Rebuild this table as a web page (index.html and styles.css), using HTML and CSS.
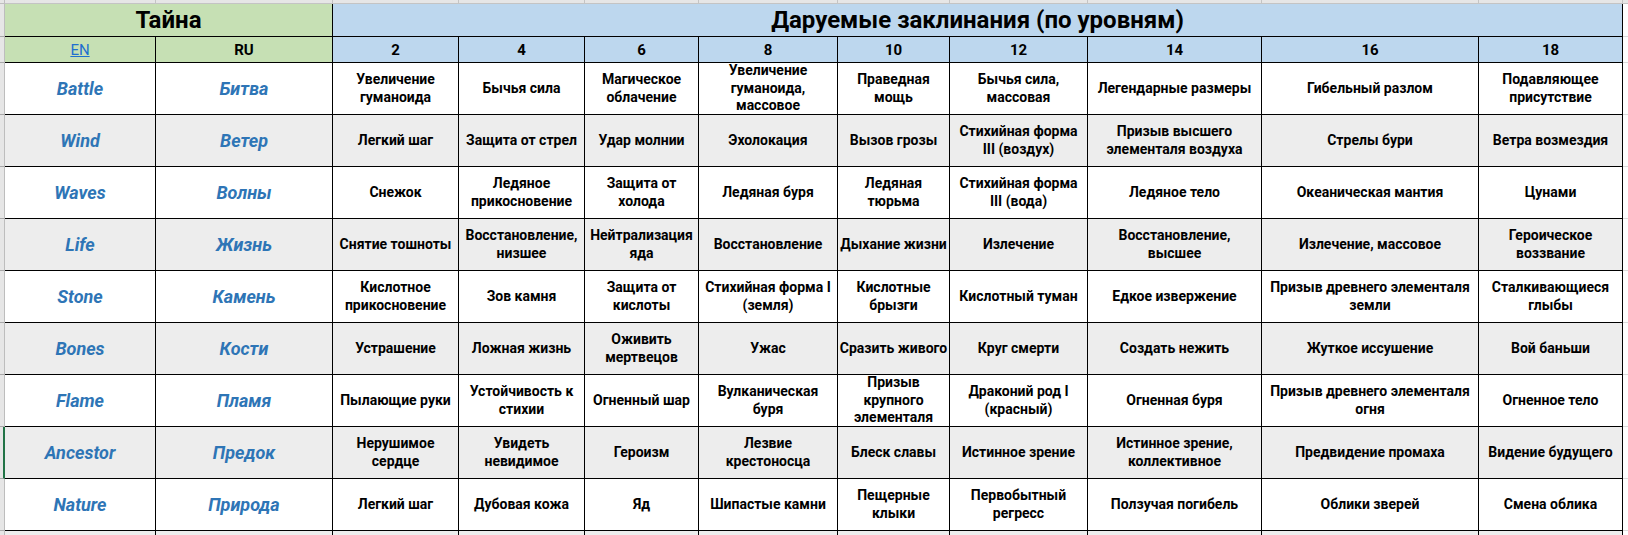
FILE: index.html
```html
<!DOCTYPE html>
<html lang="ru">
<head>
<meta charset="utf-8">
<title>Тайна — Даруемые заклинания</title>
<link rel="stylesheet" href="styles.css">
</head>
<body>
<div class="sheet">
  <div class="gutter">
    <div class="g-corner"></div>
    <div class="g g-h1"></div>
    <div class="g g-h2"></div>
    <div class="g g-row"></div>
    <div class="g g-row"></div>
    <div class="g g-row"></div>
    <div class="g g-row"></div>
    <div class="g g-row"></div>
    <div class="g g-row"></div>
    <div class="g g-row"></div>
    <div class="g g-row g-sel"></div>
    <div class="g g-row"></div>
    <div class="g g-row"></div>
  </div>
  <div class="main">
    <div class="colhdr">
      <div></div><div></div><div></div><div></div><div></div><div></div><div></div><div></div><div></div><div></div><div></div>
    </div>
    <div class="grid">
      <div class="c title green span2">Тайна</div>
      <div class="c title blue span9">Даруемые заклинания (по уровням)</div>

      <div class="c hdr green"><a class="link" href="#">EN</a></div>
      <div class="c hdr green">RU</div>
      <div class="c hdr blue">2</div>
      <div class="c hdr blue">4</div>
      <div class="c hdr blue">6</div>
      <div class="c hdr blue">8</div>
      <div class="c hdr blue">10</div>
      <div class="c hdr blue">12</div>
      <div class="c hdr blue">14</div>
      <div class="c hdr blue">16</div>
      <div class="c hdr blue">18</div>

      <div class="c name">Battle</div>
      <div class="c name">Битва</div>
      <div class="c t"><span>Увеличение гуманоида</span></div>
      <div class="c t"><span>Бычья сила</span></div>
      <div class="c t"><span>Магическое облачение</span></div>
      <div class="c t"><span>Увеличение гуманоида, массовое</span></div>
      <div class="c t tight"><span>Праведная мощь</span></div>
      <div class="c t"><span>Бычья сила, массовая</span></div>
      <div class="c t"><span>Легендарные размеры</span></div>
      <div class="c t"><span>Гибельный разлом</span></div>
      <div class="c t"><span>Подавляющее присутствие</span></div>

      <div class="c name alt">Wind</div>
      <div class="c name alt">Ветер</div>
      <div class="c t alt"><span>Легкий шаг</span></div>
      <div class="c t alt"><span>Защита от стрел</span></div>
      <div class="c t alt"><span>Удар молнии</span></div>
      <div class="c t alt"><span>Эхолокация</span></div>
      <div class="c t tight alt"><span>Вызов грозы</span></div>
      <div class="c t alt"><span>Стихийная форма III (воздух)</span></div>
      <div class="c t alt"><span>Призыв высшего элементаля воздуха</span></div>
      <div class="c t alt"><span>Стрелы бури</span></div>
      <div class="c t alt"><span>Ветра возмездия</span></div>

      <div class="c name">Waves</div>
      <div class="c name">Волны</div>
      <div class="c t"><span>Снежок</span></div>
      <div class="c t"><span>Ледяное прикосновение</span></div>
      <div class="c t"><span>Защита от холода</span></div>
      <div class="c t"><span>Ледяная буря</span></div>
      <div class="c t tight"><span>Ледяная тюрьма</span></div>
      <div class="c t"><span>Стихийная форма III (вода)</span></div>
      <div class="c t"><span>Ледяное тело</span></div>
      <div class="c t"><span>Океаническая мантия</span></div>
      <div class="c t"><span>Цунами</span></div>

      <div class="c name alt">Life</div>
      <div class="c name alt">Жизнь</div>
      <div class="c t alt"><span>Снятие тошноты</span></div>
      <div class="c t alt"><span>Восстановление, низшее</span></div>
      <div class="c t alt"><span>Нейтрализация яда</span></div>
      <div class="c t alt"><span>Восстановление</span></div>
      <div class="c t tight alt"><span>Дыхание жизни</span></div>
      <div class="c t alt"><span>Излечение</span></div>
      <div class="c t alt"><span>Восстановление, высшее</span></div>
      <div class="c t alt"><span>Излечение, массовое</span></div>
      <div class="c t alt"><span>Героическое воззвание</span></div>

      <div class="c name">Stone</div>
      <div class="c name">Камень</div>
      <div class="c t"><span>Кислотное прикосновение</span></div>
      <div class="c t"><span>Зов камня</span></div>
      <div class="c t"><span>Защита от кислоты</span></div>
      <div class="c t"><span>Стихийная форма I (земля)</span></div>
      <div class="c t tight"><span>Кислотные брызги</span></div>
      <div class="c t"><span>Кислотный туман</span></div>
      <div class="c t"><span>Едкое извержение</span></div>
      <div class="c t"><span>Призыв древнего элементаля земли</span></div>
      <div class="c t"><span>Сталкивающиеся глыбы</span></div>

      <div class="c name alt">Bones</div>
      <div class="c name alt">Кости</div>
      <div class="c t alt"><span>Устрашение</span></div>
      <div class="c t alt"><span>Ложная жизнь</span></div>
      <div class="c t alt"><span>Оживить мертвецов</span></div>
      <div class="c t alt"><span>Ужас</span></div>
      <div class="c t tight alt"><span>Сразить живого</span></div>
      <div class="c t alt"><span>Круг смерти</span></div>
      <div class="c t alt"><span>Создать нежить</span></div>
      <div class="c t alt"><span>Жуткое иссушение</span></div>
      <div class="c t alt"><span>Вой баньши</span></div>

      <div class="c name">Flame</div>
      <div class="c name">Пламя</div>
      <div class="c t"><span>Пылающие руки</span></div>
      <div class="c t"><span>Устойчивость к стихии</span></div>
      <div class="c t"><span>Огненный шар</span></div>
      <div class="c t"><span>Вулканическая буря</span></div>
      <div class="c t tight"><span>Призыв крупного элементаля</span></div>
      <div class="c t"><span>Драконий род I (красный)</span></div>
      <div class="c t"><span>Огненная буря</span></div>
      <div class="c t"><span>Призыв древнего элементаля огня</span></div>
      <div class="c t"><span>Огненное тело</span></div>

      <div class="c name alt">Ancestor</div>
      <div class="c name alt">Предок</div>
      <div class="c t alt"><span>Нерушимое сердце</span></div>
      <div class="c t alt"><span>Увидеть невидимое</span></div>
      <div class="c t alt"><span>Героизм</span></div>
      <div class="c t alt"><span>Лезвие крестоносца</span></div>
      <div class="c t tight alt"><span>Блеск славы</span></div>
      <div class="c t alt"><span>Истинное зрение</span></div>
      <div class="c t alt"><span>Истинное зрение, коллективное</span></div>
      <div class="c t alt"><span>Предвидение промаха</span></div>
      <div class="c t alt"><span>Видение будущего</span></div>

      <div class="c name">Nature</div>
      <div class="c name">Природа</div>
      <div class="c t"><span>Легкий шаг</span></div>
      <div class="c t"><span>Дубовая кожа</span></div>
      <div class="c t"><span>Яд</span></div>
      <div class="c t"><span>Шипастые камни</span></div>
      <div class="c t tight"><span>Пещерные клыки</span></div>
      <div class="c t"><span>Первобытный регресс</span></div>
      <div class="c t"><span>Ползучая погибель</span></div>
      <div class="c t"><span>Облики зверей</span></div>
      <div class="c t"><span>Смена облика</span></div>

      <div class="c alt"></div><div class="c alt"></div><div class="c alt"></div><div class="c alt"></div>
      <div class="c alt"></div><div class="c alt"></div><div class="c alt"></div><div class="c alt"></div>
      <div class="c alt"></div><div class="c alt"></div><div class="c alt"></div>
    </div>
  </div>
  <div class="filler">
    <div class="f-corner"></div>
    <div class="f f-h1"></div>
    <div class="f f-h2"></div>
    <div class="f f-row"></div>
    <div class="f f-row"></div>
    <div class="f f-row"></div>
    <div class="f f-row"></div>
    <div class="f f-row"></div>
    <div class="f f-row"></div>
    <div class="f f-row"></div>
    <div class="f f-row"></div>
    <div class="f f-row"></div>
    <div class="f f-row"></div>
  </div>
</div>
</body>
</html>
```
FILE: styles.css
```css
* { box-sizing: border-box; }

html, body {
  margin: 0;
  padding: 0;
  background: #ffffff;
  overflow: hidden;
}

body {
  font-family: Roboto, "Liberation Sans", Arial, sans-serif;
  color: #000;
}

.sheet {
  display: flex;
  align-items: flex-start;
  width: 1628px;
  height: 535px;
  overflow: hidden;
}

/* row-number gutter on the left */
.gutter {
  width: 5px;
  flex: none;
  display: flex;
  flex-direction: column;
  background: #e6e6e6;
}
.g-corner {
  height: 4px;
  border-bottom: 1px solid #bfbfbf;
  border-right: 1px solid #bfbfbf;
}
.g {
  border-right: 1px solid #bdbdbd;
  border-bottom: 1px solid #a8a8a8;
}
.g-h1 { height: 33px; }
.g-h2 { height: 26px; }
.g-row { height: 52px; }
.g-sel { border-right: 2px solid #217346; }

/* main sheet area */
.main {
  flex: none;
  display: flex;
  flex-direction: column;
}

.colhdr {
  display: grid;
  grid-template-columns: 150px 176px 125px 125px 113px 138px 111px 137px 173px 216px 143px;
  column-gap: 1px;
  height: 4px;
  background: #c4c4c4;
  border-bottom: 1px solid #c4c4c4;
  border-right: 1px solid #c4c4c4;
}
.colhdr div { background: #e6e6e6; }

.grid {
  display: grid;
  grid-template-columns: 150px 176px 125px 125px 113px 138px 111px 137px 173px 216px 143px;
  grid-template-rows: 32px 25px repeat(9, 51px) 20px;
  gap: 1px;
  background: #000;
  border-right: 1px solid #000;
}

.c {
  background: #fff;
  display: flex;
  align-items: center;
  justify-content: center;
  text-align: center;
  overflow: hidden;
  padding: 0 3px;
}

.alt { background: #ededed; }
.green { background: #c6e0b4; }
.blue { background: #bdd7ee; }

.span2 { grid-column: span 2; }
.span9 { grid-column: span 9; }

.title {
  font-size: 24px;
  font-weight: 700;
}

.hdr {
  font-size: 15px;
  font-weight: 700;
}

.link {
  color: #1f6fcf;
  font-weight: 400;
  text-decoration: underline;
}

.name {
  font-size: 18px;
  font-weight: 700;
  font-style: italic;
  color: #2e75b6;
}

.t {
  font-size: 14px;
  font-weight: 700;
  line-height: 17.5px;
}
.t span { display: block; }
.t.tight { padding: 0; }

/* empty area to the right of the table */
.filler {
  flex: 1;
  display: flex;
  flex-direction: column;
  background: #fff;
}
.f-corner {
  height: 4px;
  background: #e6e6e6;
  border-bottom: 1px solid #c4c4c4;
}
.f { border-bottom: 1px solid #dadada; }
.f-h1 { height: 33px; }
.f-h2 { height: 26px; }
.f-row { height: 52px; }
```
